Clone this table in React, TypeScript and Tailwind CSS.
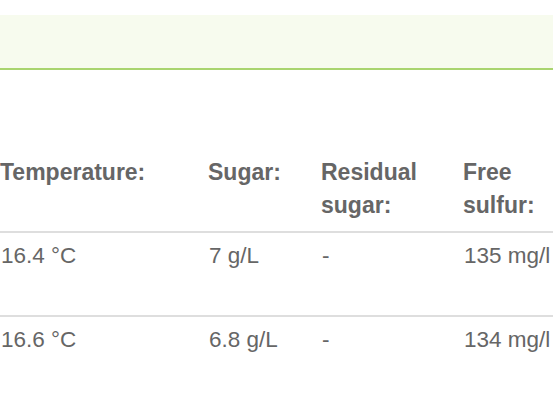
const headers = ['Temperature:', 'Sugar:', 'Residual sugar:', 'Free sulfur:'];

const rows = [
  ['16.4 °C', '7 g/L', '-', '135 mg/l'],
  ['16.6 °C', '6.8 g/L', '-', '134 mg/l'],
];

const cols = 'grid grid-cols-[208px_113px_142px_100px]';

export default function App() {
  return (
    <div className="h-[400px] w-[553px] overflow-hidden bg-white pt-[15px] font-['Liberation_Sans',Arial,sans-serif] text-[22.5px] text-[#666]">
      <div className="h-[55px] border-b-2 border-[#a9d46f] bg-[#f7fbee]" />

      <div className="mt-[86px]">
        <div className={`${cols} items-start border-b-2 border-[#dedede] pb-[9px] text-[23px] font-bold leading-[33px]`}>
          {headers.map((h) => (
            <div key={h} className="pr-4">
              {h}
            </div>
          ))}
        </div>

        {rows.map((r, i) => (
          <div
            key={i}
            className={`${cols} h-[84px] items-start whitespace-nowrap pt-[7px] leading-[32px] ${i < rows.length - 1 ? 'border-b-2 border-[#dedede]' : ''}`}
          >
            {r.map((c, j) => (
              <div key={j} className="pl-[1px]">{c}</div>
            ))}
          </div>
        ))}
      </div>
    </div>
  );
}
